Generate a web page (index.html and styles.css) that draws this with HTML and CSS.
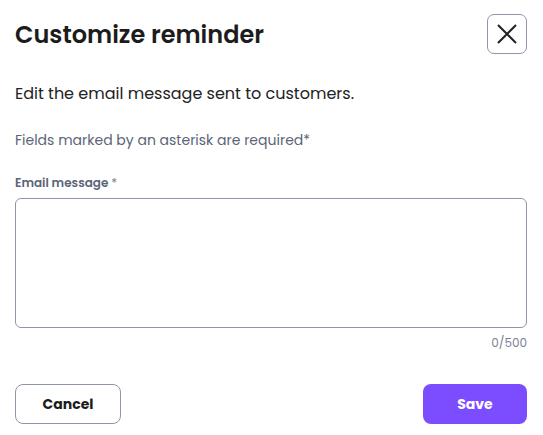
FILE: index.html
```html
<!DOCTYPE html>
<html lang="en">
<head>
<meta charset="utf-8">
<title>Customize reminder</title>
<link rel="stylesheet" href="styles.css">
</head>
<body>
<div class="dialog">
  <div class="header">
    <h1 class="title">Customize reminder</h1>
    <button class="close" aria-label="Close">
      <svg width="22" height="22" viewBox="0 0 22 22"><path d="M2 2 L20 20 M20 2 L2 20" stroke="#222" stroke-width="2" fill="none"/></svg>
    </button>
  </div>
  <p class="desc">Edit the email message sent to customers.</p>
  <p class="note">Fields marked by an asterisk are required*</p>
  <label class="label">Email message <span class="req">*</span></label>
  <textarea class="message"></textarea>
  <div class="counter">0/500</div>
  <div class="actions">
    <button class="btn btn-cancel">Cancel</button>
    <button class="btn btn-save">Save</button>
  </div>
</div>
</body>
</html>
```
FILE: styles.css
```css
html, body {
  margin: 0;
  padding: 0;
  background: #fff;
}
body {
  font-family: "Poppins", "Open Sans", "Liberation Sans", sans-serif;
  color: #222;
}
.dialog {
  padding: 14px 16px 0 15px;
  display: flex;
  flex-direction: column;
}
.header {
  display: flex;
  justify-content: space-between;
  align-items: center;
  height: 40px;
}
.title {
  margin: 0;
  font-size: 24px;
  font-weight: 600;
  color: #1c1c1c;
  letter-spacing: 0;
}
.close {
  width: 40px;
  height: 40px;
  border: 1px solid #8d97a8;
  border-radius: 7px;
  background: #fff;
  display: flex;
  align-items: center;
  justify-content: center;
  padding: 0;
}
.desc {
  margin: 28px 0 0;
  font-size: 16px;
  line-height: 24px;
  color: #222;
}
.note {
  margin: 24px 0 0;
  font-size: 14px;
  line-height: 20px;
  color: #5b6577;
}
.label {
  margin-top: 24px;
  font-size: 12px;
  line-height: 18px;
  font-weight: 600;
  color: #5b6577;
}
.req {
  font-weight: 400;
  color: #7a8496;
}
.message {
  margin-top: 6px;
  height: 130px;
  box-sizing: border-box;
  border: 1px solid #8d97a8;
  border-radius: 6px;
  resize: none;
  font-family: inherit;
}
.counter {
  margin-top: 7px;
  text-align: right;
  font-size: 12px;
  line-height: 16px;
  color: #7a8496;
}
.actions {
  margin-top: 33px;
  display: flex;
  justify-content: space-between;
}
.btn {
  height: 40px;
  border-radius: 8px;
  font-family: inherit;
  font-size: 14px;
  font-weight: 700;
  padding: 0;
}
.btn-cancel {
  width: 106px;
  background: #fff;
  border: 1px solid #8d97a8;
  color: #1c1c1c;
}
.btn-save {
  width: 104px;
  background: #7c4dff;
  border: none;
  color: #fff;
}
```
